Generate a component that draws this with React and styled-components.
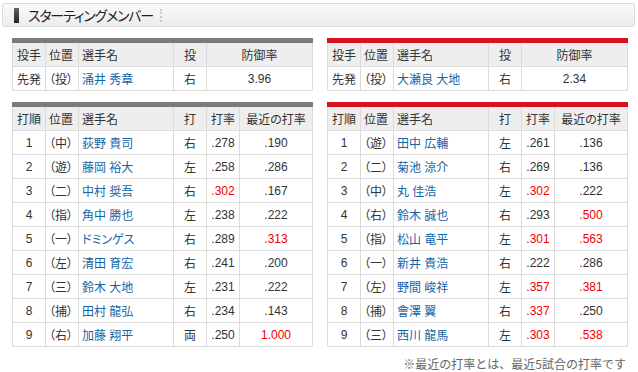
import React from "react";
import styled, { createGlobalStyle } from "styled-components";

const Global = createGlobalStyle`
  html, body { margin: 0; padding: 0; background: #fff; }
  body {
    font-family: "Liberation Sans", "Noto Sans CJK JP", sans-serif;
    font-size: 12px;
    color: #333;
    font-feature-settings: "palt";
  }
`;

const Page = styled.div`
  width: 638px;
  height: 372px;
  padding-top: 3px;
  box-sizing: border-box;
`;

const TitleBar = styled.div`
  margin: 0 3px 0 2px;
  height: 24px;
  box-sizing: border-box;
  border: 1px solid #dadada;
  border-radius: 2px;
  background: linear-gradient(#fafafa, #ececec);
  display: flex;
  align-items: center;
  padding-left: 11px;
`;

const TitleMark = styled.span`
  width: 5px;
  height: 15px;
  background: linear-gradient(#666, #222);
  margin-right: 9px;
`;

const TitleText = styled.span`
  font-family: "Noto Sans CJK JP", sans-serif;
  font-size: 14px;
  color: #1d1d33;
  letter-spacing: -1.2px;
  line-height: 1;
`;

const Dots = styled.span`
  margin-left: 7px;
  height: 13px;
  border-left: 2px dotted #c8c8c8;
`;

const Columns = styled.div`
  display: flex;
  gap: 15px;
  padding: 11px 0 0 12px;
`;

const Side = styled.div`
  width: 300px;
  display: flex;
  flex-direction: column;
  gap: 11px;
`;

const Table = styled.table`
  width: 300px;
  table-layout: fixed;
  border-collapse: collapse;
  border-top: 5px solid ${(p) => p.$bar};
`;

const Th = styled.th`
  background: #eeeeee;
  border: 1px solid #dcdcdc;
  border-top: none;
  font-weight: normal;
  height: 23px;
  padding: 0 3px;
  text-align: ${(p) => p.$align || "center"};
  white-space: nowrap;
  overflow: hidden;
  color: #333;
`;

const Td = styled.td`
  border: 1px solid #dcdcdc;
  height: 23px;
  padding: 0 3px;
  text-align: ${(p) => p.$align || "center"};
  white-space: nowrap;
  overflow: hidden;
  color: ${(p) => (p.$red ? "#f00000" : "#333")};
`;

const Name = styled.span`
  color: #1565a6;
`;

const Note = styled.div`
  text-align: right;
  font-family: "Noto Sans CJK JP", sans-serif;
  font-feature-settings: normal;
  font-size: 12px;
  color: #666;
  margin-top: -3px;
  padding-right: 1px;
`;

const teams = [
  {
    bar: "#7a7a7a",
    pitcher: { pos: "（投）", name: "涌井 秀章", hand: "右", era: "3.96" },
    pw: [33, 33, 95, 33, 106],
    bw: [33, 33, 95, 33, 33, 73],
    batters: [
      ["1", "（中）", "荻野 貴司", "右", ".278", ".190"],
      ["2", "（遊）", "藤岡 裕大", "左", ".258", ".286"],
      ["3", "（二）", "中村 奨吾", "右", "!.302", ".167"],
      ["4", "（指）", "角中 勝也", "左", ".238", ".222"],
      ["5", "（一）", "ドミンゲス", "右", ".289", "!.313"],
      ["6", "（左）", "清田 育宏", "右", ".241", ".200"],
      ["7", "（三）", "鈴木 大地", "左", ".231", ".222"],
      ["8", "（捕）", "田村 龍弘", "右", ".234", ".143"],
      ["9", "（右）", "加藤 翔平", "両", ".250", "!1.000"],
    ],
  },
  {
    bar: "#d8121e",
    pitcher: { pos: "（投）", name: "大瀬良 大地", hand: "右", era: "2.34" },
    pw: [33, 33, 95, 33, 106],
    bw: [33, 33, 95, 33, 33, 73],
    batters: [
      ["1", "（遊）", "田中 広輔", "左", ".261", ".136"],
      ["2", "（二）", "菊池 涼介", "右", ".269", ".136"],
      ["3", "（中）", "丸 佳浩", "左", "!.302", ".222"],
      ["4", "（右）", "鈴木 誠也", "右", ".293", "!.500"],
      ["5", "（指）", "松山 竜平", "左", "!.301", "!.563"],
      ["6", "（一）", "新井 貴浩", "右", ".222", ".286"],
      ["7", "（左）", "野間 峻祥", "左", "!.357", "!.381"],
      ["8", "（捕）", "會澤 翼", "右", "!.337", ".250"],
      ["9", "（三）", "西川 龍馬", "左", "!.303", "!.538"],
    ],
  },
];

const Num = ({ v }) => {
  const red = v.startsWith("!");
  return <Td $red={red}>{red ? v.slice(1) : v}</Td>;
};

const Cols = ({ widths }) => (
  <colgroup>
    {widths.map((w, i) => (
      <col key={i} style={{ width: w }} />
    ))}
  </colgroup>
);

const TeamSide = ({ team }) => (
  <Side>
    <Table $bar={team.bar}>
      <Cols widths={team.pw} />
      <thead>
        <tr>
          <Th>投手</Th>
          <Th $align="left">位置</Th>
          <Th $align="left">選手名</Th>
          <Th>投</Th>
          <Th>防御率</Th>
        </tr>
      </thead>
      <tbody>
        <tr>
          <Td>先発</Td>
          <Td $align="left">{team.pitcher.pos}</Td>
          <Td $align="left">
            <Name>{team.pitcher.name}</Name>
          </Td>
          <Td>{team.pitcher.hand}</Td>
          <Td>{team.pitcher.era}</Td>
        </tr>
      </tbody>
    </Table>
    <Table $bar={team.bar}>
      <Cols widths={team.bw} />
      <thead>
        <tr>
          <Th>打順</Th>
          <Th $align="left">位置</Th>
          <Th $align="left">選手名</Th>
          <Th>打</Th>
          <Th>打率</Th>
          <Th>最近の打率</Th>
        </tr>
      </thead>
      <tbody>
        {team.batters.map((b) => (
          <tr key={b[0]}>
            <Td>{b[0]}</Td>
            <Td $align="left">{b[1]}</Td>
            <Td $align="left">
              <Name>{b[2]}</Name>
            </Td>
            <Td>{b[3]}</Td>
            <Num v={b[4]} />
            <Num v={b[5]} />
          </tr>
        ))}
      </tbody>
    </Table>
  </Side>
);

export default function App() {
  return (
    <Page>
      <Global />
      <TitleBar>
        <TitleMark />
        <TitleText>スターティングメンバー</TitleText>
        <Dots />
      </TitleBar>
      <Columns>
        {teams.map((t, i) => (
          <TeamSide key={i} team={t} />
        ))}
      </Columns>
      <Columns>
        <Side />
        <Side>
          <Note>※最近の打率とは、最近5試合の打率です</Note>
        </Side>
      </Columns>
    </Page>
  );
}
